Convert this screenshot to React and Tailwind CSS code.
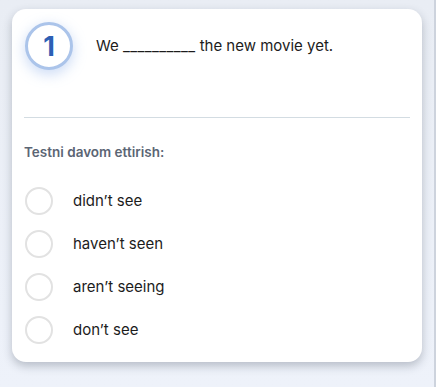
export default function App() {
  const options = ["didn’t see", "haven’t seen", "aren’t seeing", "don’t see"];

  return (
    <div className="relative min-h-[387px] w-[436px] bg-gradient-to-b from-[#e9edf4] to-[#eef2fa] pt-[9px] pl-[12px] font-['Inter',sans-serif]">
      {/* right edge of next panel */}
      <div className="absolute right-0 top-0 h-full w-[2px] bg-[#cdd3dd]" />

      <div className="h-[353px] w-[410px] rounded-[14px] bg-white px-[12px] pt-[13px] shadow-[0_4px_10px_rgba(40,50,70,0.28)]">
        {/* Question */}
        <div className="flex items-center gap-[23px]">
          <div className="ml-[1px] flex h-[48px] w-[48px] items-center justify-center rounded-full border-[3px] border-[#abc4ea] bg-white shadow-[0_4px_14px_rgba(120,160,230,0.4)]">
            <span className="text-[27px] font-bold leading-none text-[#2d5fb4]">1</span>
          </div>
          <p className="text-[15px] text-[#1c1c1c]">
            We <span className="tracking-[0.4px]">__________</span> the new movie yet.
          </p>
        </div>

        <div className="mt-[47px] h-px bg-[#d3dce2]" />

        <p className="mt-[24px] text-[13.5px] font-semibold leading-[20px] text-[#5b6574]">
          Testni davom ettirish:
        </p>

        <div className="mt-[25px] flex flex-col gap-[15px]">
          {options.map((o) => (
            <label key={o} className="flex items-center gap-[20px]">
              <span className="ml-[1px] h-[28px] w-[28px] rounded-full border-2 border-[#e2e2e2]" />
              <span className="text-[15px] text-[#1c1c1c]">{o}</span>
            </label>
          ))}
        </div>
      </div>
    </div>
  );
}
